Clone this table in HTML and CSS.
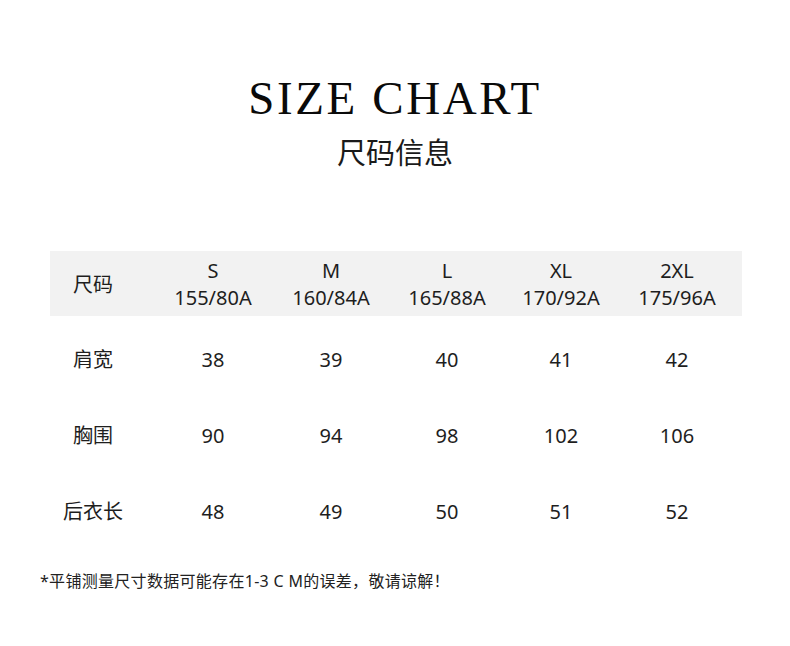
FILE: index.html
```html
<!DOCTYPE html>
<html lang="zh">
<head>
<meta charset="utf-8">
<title>Size Chart</title>
<link rel="stylesheet" href="styles.css">
</head>
<body>
<div class="page">
  <h1 class="title">SIZE CHART</h1>
  <h2 class="subtitle">尺码信息</h2>
  <div class="table">
    <div class="row head">
      <div class="cell label">尺码</div>
      <div class="cell"><span>S</span><span>155/80A</span></div>
      <div class="cell"><span>M</span><span>160/84A</span></div>
      <div class="cell"><span>L</span><span>165/88A</span></div>
      <div class="cell"><span>XL</span><span>170/92A</span></div>
      <div class="cell"><span>2XL</span><span>175/96A</span></div>
    </div>
    <div class="body">
      <div class="row">
        <div class="cell label">肩宽</div>
        <div class="cell">38</div>
        <div class="cell">39</div>
        <div class="cell">40</div>
        <div class="cell">41</div>
        <div class="cell">42</div>
      </div>
      <div class="row">
        <div class="cell label">胸围</div>
        <div class="cell">90</div>
        <div class="cell">94</div>
        <div class="cell">98</div>
        <div class="cell">102</div>
        <div class="cell">106</div>
      </div>
      <div class="row">
        <div class="cell label">后衣长</div>
        <div class="cell">48</div>
        <div class="cell">49</div>
        <div class="cell">50</div>
        <div class="cell">51</div>
        <div class="cell">52</div>
      </div>
    </div>
  </div>
  <p class="note">*平铺测量尺寸数据可能存在1-3 C M的误差，敬请谅解！</p>
</div>
</body>
</html>
```

FILE: styles.css
```css
* { box-sizing: border-box; }
html, body { margin: 0; padding: 0; background: #fff; }
body {
  font-family: "Noto Sans", "Noto Sans CJK SC", sans-serif;
  color: #1e1e1e;
}
.page {
  width: 790px;
  height: 646px;
  padding-top: 75px;
  display: flex;
  flex-direction: column;
}
.title {
  margin: 0;
  font-family: "Liberation Serif", serif;
  font-weight: normal;
  font-size: 47px;
  line-height: 46px;
  letter-spacing: 2.6px;
  text-align: center;
  color: #0a0a0a;
}
.subtitle {
  margin: 16px 0 0;
  font-family: "Noto Sans CJK SC", sans-serif;
  font-weight: normal;
  font-size: 29px;
  line-height: 29px;
  text-align: center;
  color: #1a1a1a;
}
.table {
  margin: 85px 48px 0 50px;
  display: flex;
  flex-direction: column;
}
.row {
  display: grid;
  grid-template-columns: 104px 118px 118px 114px 114px 118px;
  align-items: center;
  height: 76px;
}
.row.head {
  background: #f2f2f2;
  height: 65px;
  padding-top: 1px;
}
.body { margin-top: 5px; }
.cell {
  display: flex;
  flex-direction: column;
  align-items: center;
  font-size: 20px;
  line-height: 27px;
}
.cell.label { padding-right: 18px; }
.note {
  margin: 21px 0 0 40px;
  font-size: 16px;
  line-height: 22px;
  color: #222;
  letter-spacing: 0.3px;
}
```
